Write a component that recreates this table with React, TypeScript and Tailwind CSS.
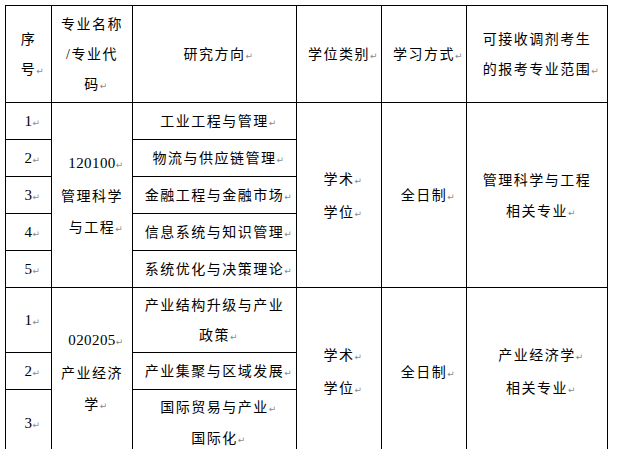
import React from "react";

// Word-style paragraph mark, kept out of the centering width
function Mark() {
  return (
    <span className="inline-block w-0 text-left font-['DejaVu_Sans',sans-serif] text-[9px] tracking-normal text-[#8a8a8a]">
      ↵
    </span>
  );
}

function Line({ children, mark = false }: { children: React.ReactNode; mark?: boolean }) {
  return (
    <div className="whitespace-nowrap">
      {children}
      {mark && <Mark />}
    </div>
  );
}

function Num({ children }: { children: React.ReactNode }) {
  return <span className="text-[15px] tracking-[0.4px]">{children}</span>;
}

const cell = "border border-black p-0 pt-[3px] text-center align-middle";

export default function App() {
  const rows1 = [
    "工业工程与管理",
    "物流与供应链管理",
    "金融工程与金融市场",
    "信息系统与知识管理",
    "系统优化与决策理论",
  ];

  return (
    <div className="h-[466px] w-[618px] bg-white">
      <div className="h-[449px] overflow-hidden pl-[5px] pt-[5px]">
        <table className="w-[602px] table-fixed border-collapse font-['Liberation_Serif','Noto_Sans_CJK_SC',serif] text-[14px] leading-[31px] tracking-[1.5px] text-black">
          <colgroup>
            <col className="w-[46px]" />
            <col className="w-[81px]" />
            <col className="w-[164px]" />
            <col className="w-[85px]" />
            <col className="w-[85px]" />
            <col className="w-[141px]" />
          </colgroup>
          <tbody>
            <tr className="h-[97px] leading-[30px]">
              <td className={cell}>
                <Line>序</Line>
                <Line mark>号</Line>
              </td>
              <td className={cell}>
                <Line>专业名称</Line>
                <Line>/专业代</Line>
                <Line mark>码</Line>
              </td>
              <td className={cell}>
                <Line mark>研究方向</Line>
              </td>
              <td className={cell}>
                <Line mark>学位类别</Line>
              </td>
              <td className={cell}>
                <Line mark>学习方式</Line>
              </td>
              <td className={cell}>
                <Line>可接收调剂考生</Line>
                <Line mark>的报考专业范围</Line>
              </td>
            </tr>

            {rows1.map((dir, i) => (
              <tr key={dir} className={i === 0 ? "h-[36px]" : "h-[37px]"}>
                <td className={cell}>
                  <Line mark>
                    <Num>{i + 1}</Num>
                  </Line>
                </td>
                {i === 0 && (
                  <td className={cell} rowSpan={5}>
                    <Line mark>
                      <Num>120100</Num>
                    </Line>
                    <Line>管理科学</Line>
                    <Line mark>与工程</Line>
                  </td>
                )}
                <td className={cell}>
                  <Line mark>{dir}</Line>
                </td>
                {i === 0 && (
                  <>
                    <td className={cell} rowSpan={5}>
                      <Line mark>学术</Line>
                      <Line mark>学位</Line>
                    </td>
                    <td className={cell} rowSpan={5}>
                      <Line mark>全日制</Line>
                    </td>
                    <td className={cell} rowSpan={5}>
                      <Line>管理科学与工程</Line>
                      <Line mark>相关专业</Line>
                    </td>
                  </>
                )}
              </tr>
            ))}

            <tr className="h-[63px]">
              <td className={cell}>
                <Line mark>
                  <Num>1</Num>
                </Line>
              </td>
              <td className={cell} rowSpan={3}>
                <Line mark>
                  <Num>020205</Num>
                </Line>
                <Line>产业经济</Line>
                <Line mark>学</Line>
              </td>
              <td className={`${cell} leading-[30px]`}>
                <Line>产业结构升级与产业</Line>
                <Line mark>政策</Line>
              </td>
              <td className={cell} rowSpan={3}>
                <Line mark>学术</Line>
                <Line mark>学位</Line>
              </td>
              <td className={cell} rowSpan={3}>
                <Line mark>全日制</Line>
              </td>
              <td className={cell} rowSpan={3}>
                <Line mark>产业经济学</Line>
                <Line mark>相关专业</Line>
              </td>
            </tr>
            <tr className="h-[37px]">
              <td className={cell}>
                <Line mark>
                  <Num>2</Num>
                </Line>
              </td>
              <td className={cell}>
                <Line mark>产业集聚与区域发展</Line>
              </td>
            </tr>
            <tr className="h-[66px]">
              <td className={cell}>
                <Line mark>
                  <Num>3</Num>
                </Line>
              </td>
              <td className={`${cell} leading-[30px]`}>
                <Line mark>国际贸易与产业</Line>
                <Line mark>国际化</Line>
              </td>
            </tr>
          </tbody>
        </table>
      </div>
    </div>
  );
}
